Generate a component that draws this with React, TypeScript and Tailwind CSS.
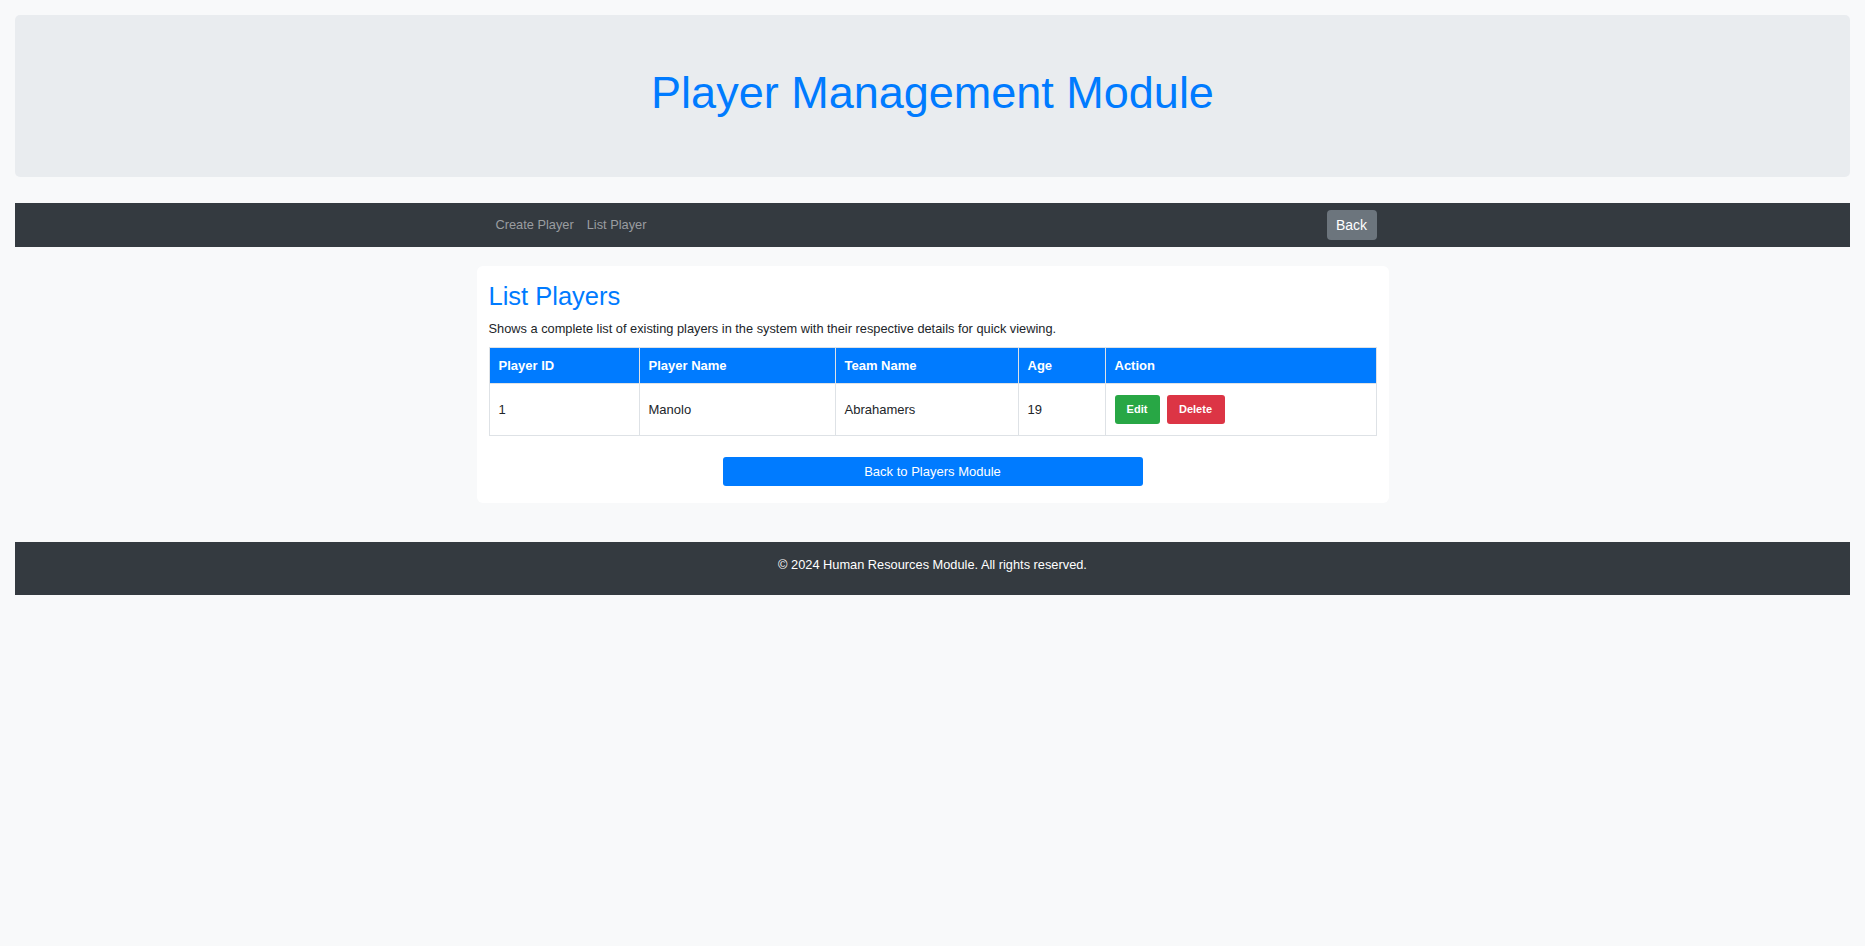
import React from "react";

export default function App() {
  const font = { fontFamily: '"Liberation Sans", Arial, sans-serif' };
  return (
    <div className="min-h-screen bg-[#f8f9fa] pt-[15px]" style={font}>
      <div className="mx-[15px] h-[162px] rounded-[5px] bg-[#e9ecef] flex items-center justify-center">
        <h1 className="text-[45px] leading-[54px] font-normal text-[#007bff] -mt-[6px]">Player Management Module</h1>
      </div>

      <nav className="mx-[15px] mt-[26px] h-[44px] bg-[#343a40]">
        <div className="w-[912px] mx-auto px-[12px] h-full flex items-center justify-between">
          <div className="flex items-center">
            <a className="px-[7px] text-[12.8px] text-[#9a9da0]">Create Player</a>
            <a className="px-[6px] text-[12.8px] text-[#9a9da0]">List Player</a>
          </div>
          <button className="h-[30px] w-[50px] rounded-[4px] bg-[#6c757d] text-white text-[14px]">Back</button>
        </div>
      </nav>

      <div className="w-[912px] mx-auto mt-[19px] bg-white rounded-[6px] px-[12px] pt-[15px] pb-[17px]">
        <h2 className="text-[25.5px] leading-[31px] text-[#007bff] font-normal">List Players</h2>
        <p className="mt-[8px] text-[12.8px] leading-[18px] text-[#212529]">
          Shows a complete list of existing players in the system with their respective details for quick viewing.
        </p>
        <table className="mt-[9px] w-full table-fixed border-collapse text-[13px]">
          <thead>
            <tr className="bg-[#007bff] text-white font-bold text-left h-[36px]">
              <th className="w-[150px] px-[9px] border border-[#dee2e6]">Player ID</th>
              <th className="w-[196px] px-[9px] border border-[#dee2e6]">Player Name</th>
              <th className="w-[183px] px-[9px] border border-[#dee2e6]">Team Name</th>
              <th className="w-[87px] px-[9px] border border-[#dee2e6]">Age</th>
              <th className="px-[9px] border border-[#dee2e6]">Action</th>
            </tr>
          </thead>
          <tbody>
            <tr className="h-[52px] text-[#212529]">
              <td className="px-[9px] border border-[#dee2e6]">1</td>
              <td className="px-[9px] border border-[#dee2e6]">Manolo</td>
              <td className="px-[9px] border border-[#dee2e6]">Abrahamers</td>
              <td className="px-[9px] border border-[#dee2e6]">19</td>
              <td className="px-[9px] border border-[#dee2e6]">
                <div className="flex gap-[7px]">
                  <button className="h-[29px] w-[45px] rounded-[3px] bg-[#28a745] text-white text-[11px] font-bold">Edit</button>
                  <button className="h-[29px] w-[58px] rounded-[3px] bg-[#dc3545] text-white text-[11px] font-bold">Delete</button>
                </div>
              </td>
            </tr>
          </tbody>
        </table>
        <div className="mt-[21px] flex justify-center">
          <button className="h-[29px] w-[420px] rounded-[3px] bg-[#007bff] text-white text-[13px]">Back to Players Module</button>
        </div>
      </div>

      <footer className="mx-[15px] mt-[39px] h-[53px] bg-[#343a40] flex items-center justify-center">
        <p className="text-white text-[12.8px] -mt-[8px]">© 2024 Human Resources Module. All rights reserved.</p>
      </footer>
    </div>
  );
}
